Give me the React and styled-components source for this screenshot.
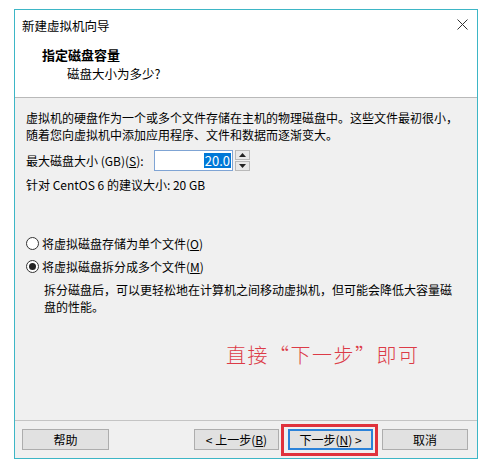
import React from "react";
import styled, { createGlobalStyle } from "styled-components";

const Global = createGlobalStyle`
  html, body { margin: 0; padding: 0; background: #ffffff; }
  body {
    font-family: "Noto Sans CJK SC", "Noto Sans", sans-serif;
    font-size: 12px;
    color: #000;
  }
`;

const Page = styled.div`
  width: 487px;
  height: 466px;
  box-sizing: border-box;
  padding: 9px 0 0 14px;
`;

const Window = styled.div`
  width: 464px;
  height: 450px;
  box-sizing: border-box;
  border: 1px solid #3db6c6;
  display: flex;
  flex-direction: column;
  background: #f0f0f0;
`;

const Header = styled.div`
  background: #ffffff;
  border-bottom: 1px solid #b9b9b9;
  height: 88px;
  box-sizing: border-box;
`;

const TitleBar = styled.div`
  height: 30px;
  display: flex;
  align-items: center;
  justify-content: space-between;
  padding: 0 9px 0 7px;
  font-size: 12.5px;
`;

const CloseIcon = styled.svg`
  width: 11px;
  height: 11px;
  margin-top: -2px;
`;

const Heading = styled.div`
  margin-top: 6px;
  padding-left: 27px;
  font-weight: 700;
  font-size: 13px;
  line-height: 18px;
`;

const SubHeading = styled.div`
  padding-left: 52px;
  font-size: 12.5px;
  line-height: 19px;
`;

const Body = styled.div`
  flex: 1;
  padding: 11px 11px 0 11px;
  display: flex;
  flex-direction: column;
`;

const Text = styled.div`
  line-height: 17px;
  margin-top: ${(p) => p.$mt || 0}px;
  padding-left: ${(p) => p.$indent || 0}px;
  white-space: nowrap;
`;

const U = styled.span`
  text-decoration: underline;
  text-underline-offset: 1px;
`;

const InputRow = styled.div`
  display: flex;
  align-items: center;
  margin-top: 7px;
  height: 21px;
`;

const Label = styled.span`
  width: 128px;
  flex: none;
`;

const Field = styled.div`
  width: 79px;
  height: 21px;
  box-sizing: border-box;
  border: 1px solid #7fa4d4;
  background: #fff;
  display: flex;
  align-items: center;
  justify-content: flex-end;
  padding-right: 1px;
`;

const Selected = styled.span`
  background: #0078d7;
  color: #fff;
  font-size: 13px;
  line-height: 15px;
  padding: 0 1px;
`;

const Spin = styled.div`
  display: flex;
  flex-direction: column;
  margin-left: 2px;
  gap: 1px;
`;

const SpinBtn = styled.div`
  width: 15px;
  height: 10px;
  box-sizing: border-box;
  border: 1px solid #b9b9b9;
  background: #e8e8e8;
  display: flex;
  align-items: center;
  justify-content: center;
`;

const RadioRow = styled.label`
  display: flex;
  align-items: center;
  gap: 3px;
  height: 17px;
  line-height: 17px;
  margin-top: ${(p) => p.$mt || 0}px;
`;

const RadioCircle = styled.span`
  width: 13px;
  height: 13px;
  box-sizing: border-box;
  border: 1px solid #333;
  border-radius: 50%;
  background: #fff;
  display: flex;
  align-items: center;
  justify-content: center;
  &::after {
    content: "";
    width: 7px;
    height: 7px;
    border-radius: 50%;
    background: ${(p) => (p.$checked ? "#222" : "transparent")};
  }
`;

const Note = styled.div`
  margin-top: 28px;
  margin-left: 200px;
  color: #dc3b47;
  font-size: 20px;
  line-height: 24px;
  letter-spacing: 1.5px;
  font-weight: 300;
  white-space: nowrap;
`;

const Footer = styled.div`
  border-top: 1px solid #c4c4c4;
  height: 38px;
  box-sizing: border-box;
  display: flex;
  align-items: center;
  padding: 0 7px 0 7px;
  gap: 9px;
`;

const Button = styled.button`
  width: ${(p) => p.$w || 86}px;
  height: 21px;
  box-sizing: border-box;
  border: ${(p) => (p.$default ? "2px solid #2b82d9" : "1px solid #adadad")};
  background: #e1e1e1;
  font-family: "Noto Sans CJK SC", "Noto Sans", sans-serif;
  font-size: 12px;
  color: #000;
  padding: 0;
  line-height: 17px;
  margin-left: ${(p) => p.$ml || 0}px;
`;

const Highlight = styled.span`
  position: relative;
  display: flex;
  &::after {
    content: "";
    position: absolute;
    left: -7px;
    right: -5px;
    top: -5px;
    bottom: -6px;
    border: 3px solid #e0323c;
    pointer-events: none;
  }
`;

function Arrow({ up }) {
  return (
    <svg width="7" height="4" viewBox="0 0 7 4">
      <path d={up ? "M0 4 L3.5 0 L7 4 Z" : "M0 0 L3.5 4 L7 0 Z"} fill="#222" />
    </svg>
  );
}

export default function App() {
  return (
    <>
      <Global />
      <Page>
        <Window>
          <Header>
            <TitleBar>
              <span>新建虚拟机向导</span>
              <CloseIcon viewBox="0 0 11 11">
                <path d="M0.5 0.5 L10.5 10.5 M10.5 0.5 L0.5 10.5" stroke="#333" strokeWidth="1" fill="none" />
              </CloseIcon>
            </TitleBar>
            <Heading>指定磁盘容量</Heading>
            <SubHeading>磁盘大小为多少?</SubHeading>
          </Header>
          <Body>
            <Text>虚拟机的硬盘作为一个或多个文件存储在主机的物理磁盘中。这些文件最初很小，</Text>
            <Text>随着您向虚拟机中添加应用程序、文件和数据而逐渐变大。</Text>
            <InputRow>
              <Label>
                最大磁盘大小 (GB)(<U>S</U>):
              </Label>
              <Field>
                <Selected>20.0</Selected>
              </Field>
              <Spin>
                <SpinBtn>
                  <Arrow up />
                </SpinBtn>
                <SpinBtn>
                  <Arrow />
                </SpinBtn>
              </Spin>
            </InputRow>
            <Text $mt={5}>针对 CentOS 6 的建议大小: 20 GB</Text>
            <RadioRow $mt={42}>
              <RadioCircle />
              <span>
                将虚拟磁盘存储为单个文件(<U>O</U>)
              </span>
            </RadioRow>
            <RadioRow $mt={6}>
              <RadioCircle $checked />
              <span>
                将虚拟磁盘拆分成多个文件(<U>M</U>)
              </span>
            </RadioRow>
            <Text $mt={6} $indent={18}>
              拆分磁盘后，可以更轻松地在计算机之间移动虚拟机，但可能会降低大容量磁
            </Text>
            <Text $indent={18}>盘的性能。</Text>
            <Note>直接“下一步”即可</Note>
          </Body>
          <Footer>
            <Button $w={87}>帮助</Button>
            <Button $w={85} $ml={76}>
              &lt; 上一步(<U>B</U>)
            </Button>
            <Highlight>
              <Button $w={85} $default>
                下一步(<U>N</U>) &gt;
              </Button>
            </Highlight>
            <Button $w={86}>取消</Button>
          </Footer>
        </Window>
      </Page>
    </>
  );
}
